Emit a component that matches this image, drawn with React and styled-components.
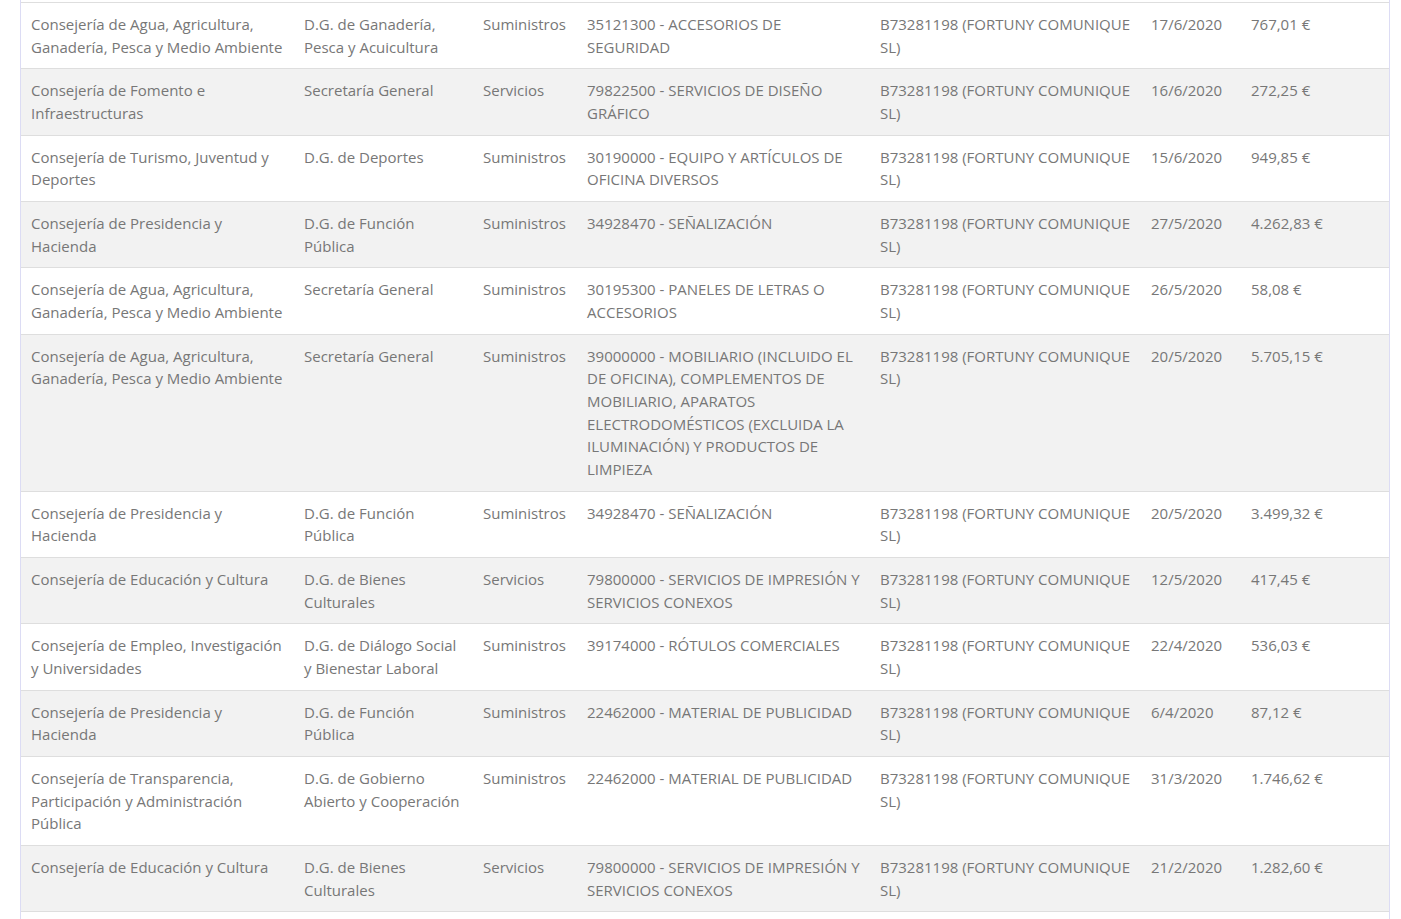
import React from 'react'
import styled, { createGlobalStyle } from 'styled-components'

const GlobalStyle = createGlobalStyle`
  html, body {
    margin: 0;
    padding: 0;
    background: #fff;
    overflow: hidden;
  }
  body {
    font-family: "Open Sans", "Liberation Sans", sans-serif;
  }
`

const EMPRESA = 'B73281198 (FORTUNY COMUNIQUE SL)'

const rows = [
  ['Consejería de Agua, Agricultura, Ganadería, Pesca y Medio Ambiente', 'D.G. de Ganadería, Pesca y Acuicultura', 'Suministros', '35121300 - ACCESORIOS DE SEGURIDAD', '17/6/2020', '767,01 €'],
  ['Consejería de Fomento e Infraestructuras', 'Secretaría General', 'Servicios', '79822500 - SERVICIOS DE DISEÑO GRÁFICO', '16/6/2020', '272,25 €'],
  ['Consejería de Turismo, Juventud y Deportes', 'D.G. de Deportes', 'Suministros', '30190000 - EQUIPO Y ARTÍCULOS DE OFICINA DIVERSOS', '15/6/2020', '949,85 €'],
  ['Consejería de Presidencia y Hacienda', 'D.G. de Función Pública', 'Suministros', '34928470 - SEÑALIZACIÓN', '27/5/2020', '4.262,83 €'],
  ['Consejería de Agua, Agricultura, Ganadería, Pesca y Medio Ambiente', 'Secretaría General', 'Suministros', '30195300 - PANELES DE LETRAS O ACCESORIOS', '26/5/2020', '58,08 €'],
  ['Consejería de Agua, Agricultura, Ganadería, Pesca y Medio Ambiente', 'Secretaría General', 'Suministros', '39000000 - MOBILIARIO (INCLUIDO EL DE OFICINA), COMPLEMENTOS DE MOBILIARIO, APARATOS ELECTRODOMÉSTICOS (EXCLUIDA LA ILUMINACIÓN) Y PRODUCTOS DE LIMPIEZA', '20/5/2020', '5.705,15 €'],
  ['Consejería de Presidencia y Hacienda', 'D.G. de Función Pública', 'Suministros', '34928470 - SEÑALIZACIÓN', '20/5/2020', '3.499,32 €'],
  ['Consejería de Educación y Cultura', 'D.G. de Bienes Culturales', 'Servicios', '79800000 - SERVICIOS DE IMPRESIÓN Y SERVICIOS CONEXOS', '12/5/2020', '417,45 €'],
  ['Consejería de Empleo, Investigación y Universidades', 'D.G. de Diálogo Social y Bienestar Laboral', 'Suministros', '39174000 - RÓTULOS COMERCIALES', '22/4/2020', '536,03 €'],
  ['Consejería de Presidencia y Hacienda', 'D.G. de Función Pública', 'Suministros', '22462000 - MATERIAL DE PUBLICIDAD', '6/4/2020', '87,12 €'],
  ['Consejería de Transparencia, Participación y Administración Pública', 'D.G. de Gobierno Abierto y Cooperación', 'Suministros', '22462000 - MATERIAL DE PUBLICIDAD', '31/3/2020', '1.746,62 €'],
  ['Consejería de Educación y Cultura', 'D.G. de Bienes Culturales', 'Servicios', '79800000 - SERVICIOS DE IMPRESIÓN Y SERVICIOS CONEXOS', '21/2/2020', '1.282,60 €'],
]

const widths = [273, 179, 104, 293, 271, 100, 148]

function App() {
  return (
    <>
      <GlobalStyle />
      <Wrapper>
        <Table>
          <colgroup>
            {widths.map((w, i) => (
              <col key={i} style={{ width: w }} />
            ))}
          </colgroup>
          <tbody>
            {rows.map((r, i) => (
              <Row key={i} $alt={i % 2 === 1}>
                <Cell>{r[0]}</Cell>
                <Cell>{r[1]}</Cell>
                <Cell>{r[2]}</Cell>
                <Cell>{r[3]}</Cell>
                <Cell>{EMPRESA}</Cell>
                <Cell>{r[4]}</Cell>
                <Cell>{r[5]}</Cell>
              </Row>
            ))}
            <Row>
              <Cell colSpan={7} />
            </Row>
          </tbody>
        </Table>
      </Wrapper>
    </>
  )
}

export default App

const Wrapper = styled.div`
  margin: 0 11px 0 20px;
  padding-top: 2px;
  border-left: 1px solid #dcdcf4;
  border-right: 1px solid #dcdcf4;
  height: 919px;
  box-sizing: border-box;
  overflow: hidden;
`

const Table = styled.table`
  width: 1368px;
  table-layout: fixed;
  border-collapse: collapse;
`

const Row = styled.tr`
  background: ${(p) => (p.$alt ? '#f2f2f2' : '#ffffff')};
  border-top: 1px solid #dedede;
`

const Cell = styled.td`
  padding: 10px 8px 10px 10px;
  vertical-align: top;
  font-size: 15px;
  line-height: 22.67px;
  height: 45px;
  color: #777777;
  text-align: left;
`
